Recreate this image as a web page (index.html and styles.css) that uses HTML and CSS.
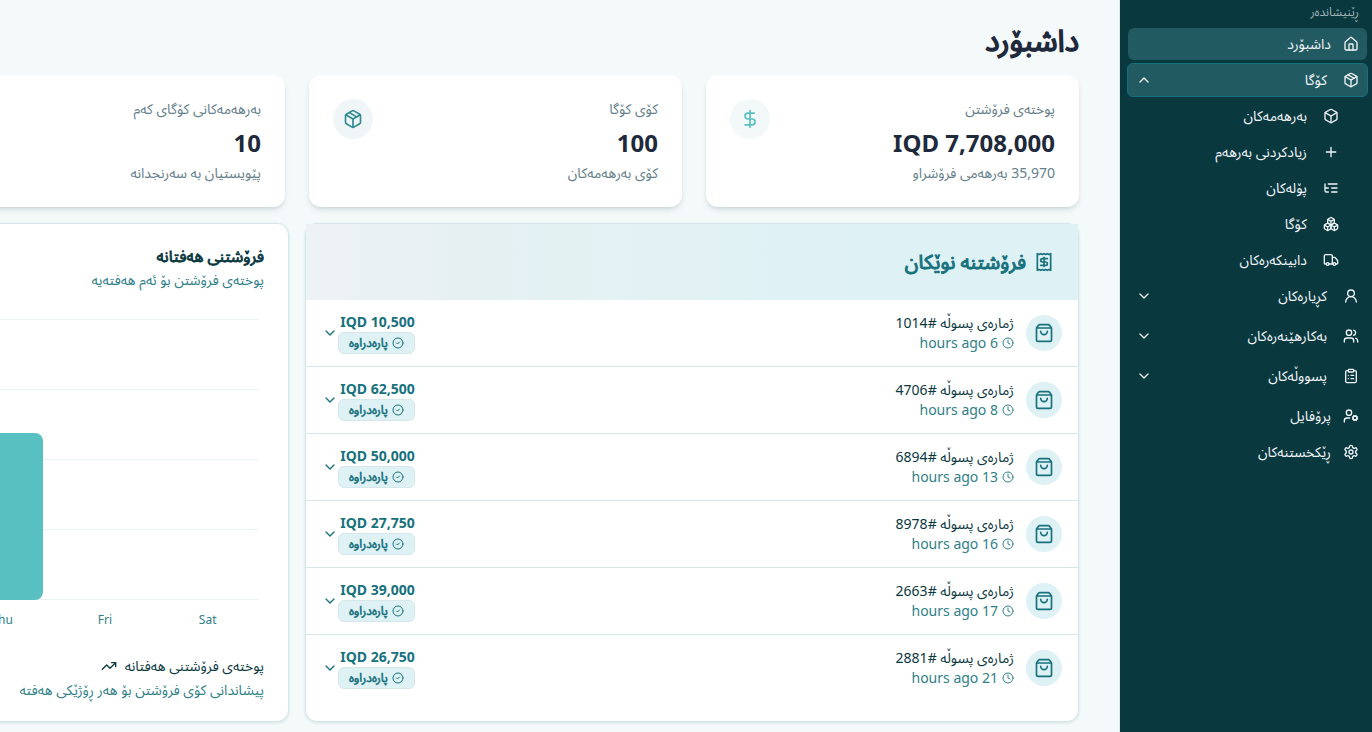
FILE: index.html
```html
<!DOCTYPE html>
<html lang="ckb" dir="rtl">
<head>
<meta charset="utf-8">
<title>داشبۆرد</title>
<link rel="stylesheet" href="styles.css">
</head>
<body>
<svg class="sprite" aria-hidden="true">
  <symbol id="house" viewBox="0 0 24 24"><path d="M15 21v-8a1 1 0 0 0-1-1h-4a1 1 0 0 0-1 1v8"/><path d="M3 10a2 2 0 0 1 .709-1.528l7-5.999a2 2 0 0 1 2.582 0l7 5.999A2 2 0 0 1 21 10v9a2 2 0 0 1-2 2H5a2 2 0 0 1-2-2z"/></symbol>
  <symbol id="package" viewBox="0 0 24 24"><path d="m7.5 4.27 9 5.15"/><path d="M21 8a2 2 0 0 0-1-1.73l-7-4a2 2 0 0 0-2 0l-7 4A2 2 0 0 0 3 8v8a2 2 0 0 0 1 1.73l7 4a2 2 0 0 0 2 0l7-4A2 2 0 0 0 21 16Z"/><path d="m3.3 7 8.7 5 8.7-5"/><path d="M12 22V12"/></symbol>
  <symbol id="box" viewBox="0 0 24 24"><path d="M21 8a2 2 0 0 0-1-1.73l-7-4a2 2 0 0 0-2 0l-7 4A2 2 0 0 0 3 8v8a2 2 0 0 0 1 1.73l7 4a2 2 0 0 0 2 0l7-4A2 2 0 0 0 21 16Z"/><path d="m3.3 7 8.7 5 8.7-5"/><path d="M12 22V12"/></symbol>
  <symbol id="plus" viewBox="0 0 24 24"><path d="M5 12h14M12 5v14"/></symbol>
  <symbol id="tree" viewBox="0 0 24 24"><path d="M21 12h-8M21 6H8M21 18h-8M3 6v4c0 1.1.9 2 2 2h3M3 10v6c0 1.1.9 2 2 2h3"/></symbol>
  <symbol id="boxes" viewBox="0 0 24 24"><path d="M2.97 12.92A2 2 0 0 0 2 14.63v3.24a2 2 0 0 0 .97 1.71l3 1.8a2 2 0 0 0 2.06 0L12 19v-5.5l-5-3-4.03 2.42Z"/><path d="m7 16.5-4.74-2.85M7 16.5l5-3M7 16.5v5.17"/><path d="M12 13.5V19l3.97 2.38a2 2 0 0 0 2.06 0l3-1.8a2 2 0 0 0 .97-1.71v-3.24a2 2 0 0 0-.97-1.71L17 10.5l-5 3Z"/><path d="m17 16.5-5-3M17 16.5l4.74-2.85M17 16.5v5.17"/><path d="M7.97 4.42A2 2 0 0 0 7 6.13v4.37l5 3 5-3V6.13a2 2 0 0 0-.97-1.71l-3-1.8a2 2 0 0 0-2.06 0l-3 1.8Z"/><path d="M12 8 7.26 5.15M12 8l4.74-2.85M12 13.5V8"/></symbol>
  <symbol id="truck" viewBox="0 0 24 24"><path d="M14 18V6a2 2 0 0 0-2-2H4a2 2 0 0 0-2 2v11a1 1 0 0 0 1 1h2M15 18H9M19 18h2a1 1 0 0 0 1-1v-3.65a1 1 0 0 0-.22-.624l-3.48-4.35A1 1 0 0 0 17.52 8H14"/><circle cx="17" cy="18" r="2"/><circle cx="7" cy="18" r="2"/></symbol>
  <symbol id="user" viewBox="0 0 24 24"><circle cx="12" cy="8" r="5"/><path d="M20 21a8 8 0 0 0-16 0"/></symbol>
  <symbol id="users" viewBox="0 0 24 24"><path d="M16 21v-2a4 4 0 0 0-4-4H6a4 4 0 0 0-4 4v2"/><circle cx="9" cy="7" r="4"/><path d="M22 21v-2a4 4 0 0 0-3-3.87M16 3.13a4 4 0 0 1 0 7.75"/></symbol>
  <symbol id="clipboard" viewBox="0 0 24 24"><rect width="8" height="4" x="8" y="2" rx="1"/><path d="M16 4h2a2 2 0 0 1 2 2v14a2 2 0 0 1-2 2H6a2 2 0 0 1-2-2V6a2 2 0 0 1 2-2h2M12 11h4M12 16h4M8 11h.01M8 16h.01"/></symbol>
  <symbol id="user-cog" viewBox="0 0 24 24"><path d="M10 15H6a4 4 0 0 0-4 4v2"/><circle cx="9" cy="7" r="4"/><circle cx="18" cy="15" r="3"/><path d="m21.700 16.400-.9-.3M15.200 13.900l-.9-.3M16.600 18.700l.3-.9M19.100 12.200l.3-.9M19.600 18.700l-.4-1M16.800 12.300l-.4-1M14.300 16.600l1-.4M20.700 13.800l1-.4"/></symbol>
  <symbol id="gear" viewBox="0 0 24 24"><path d="M12.22 2h-.44a2 2 0 0 0-2 2v.18a2 2 0 0 1-1 1.73l-.43.25a2 2 0 0 1-2 0l-.15-.08a2 2 0 0 0-2.73.73l-.22.38a2 2 0 0 0 .73 2.73l.15.1a2 2 0 0 1 1 1.72v.51a2 2 0 0 1-1 1.74l-.15.09a2 2 0 0 0-.73 2.73l.22.38a2 2 0 0 0 2.73.73l.15-.08a2 2 0 0 1 2 0l.43.25a2 2 0 0 1 1 1.73V20a2 2 0 0 0 2 2h.44a2 2 0 0 0 2-2v-.18a2 2 0 0 1 1-1.73l.43-.25a2 2 0 0 1 2 0l.15.08a2 2 0 0 0 2.73-.73l.22-.39a2 2 0 0 0-.73-2.73l-.15-.08a2 2 0 0 1-1-1.74v-.5a2 2 0 0 1 1-1.74l.15-.09a2 2 0 0 0 .73-2.73l-.22-.38a2 2 0 0 0-2.73-.73l-.15.08a2 2 0 0 1-2 0l-.43-.25a2 2 0 0 1-1-1.73V4a2 2 0 0 0-2-2z"/><circle cx="12" cy="12" r="3"/></symbol>
  <symbol id="down" viewBox="0 0 24 24"><path d="m6 9 6 6 6-6"/></symbol>
  <symbol id="up" viewBox="0 0 24 24"><path d="m18 15-6-6-6 6"/></symbol>
  <symbol id="dollar" viewBox="0 0 24 24"><path d="M12 2v20M17 5H9.5a3.5 3.5 0 0 0 0 7h5a3.5 3.5 0 0 1 0 7H6"/></symbol>
  <symbol id="receipt" viewBox="0 0 24 24"><path d="M4 2v20l2-1 2 1 2-1 2 1 2-1 2 1 2-1 2 1V2l-2 1-2-1-2 1-2-1-2 1-2-1-2 1Z"/><path d="M16 8h-6a2 2 0 1 0 0 4h4a2 2 0 1 1 0 4H8M12 17.500v-11"/></symbol>
  <symbol id="bag" viewBox="0 0 24 24"><path d="M16 10a4 4 0 0 1-8 0"/><path d="M3.103 6.034h17.794"/><path d="M3.4 5.467a2 2 0 0 0-.4 1.2V20a2 2 0 0 0 2 2h14a2 2 0 0 0 2-2V6.667a2 2 0 0 0-.4-1.2l-2-2.667A2 2 0 0 0 17 2H7a2 2 0 0 0-1.6.8z"/></symbol>
  <symbol id="clock" viewBox="0 0 24 24"><circle cx="12" cy="12" r="10"/><path d="M12 6v6l4 2"/></symbol>
  <symbol id="check" viewBox="0 0 24 24"><circle cx="12" cy="12" r="10"/><path d="m9 12 2 2 4-4"/></symbol>
  <symbol id="trend" viewBox="0 0 24 24"><path d="M16 7h6v6"/><path d="m22 7-8.500 8.500-5-5L2 17"/></symbol>
</svg>
<div class="layout">
  <aside class="sidebar">
    <p class="sidebar-title">ڕێنیشاندەر</p>
    <nav class="menu">
      <a class="item active" href="#"><svg class="icon"><use href="#house"/></svg><span>داشبۆرد</span></a>
      <button class="item group open" type="button"><svg class="icon"><use href="#package"/></svg><span>کۆگا</span><svg class="icon chevron"><use href="#up"/></svg></button>
      <div class="submenu">
        <a class="item" href="#"><svg class="icon"><use href="#box"/></svg><span>بەرهەمەکان</span></a>
        <a class="item" href="#"><svg class="icon"><use href="#plus"/></svg><span>زیادکردنی بەرهەم</span></a>
        <a class="item" href="#"><svg class="icon"><use href="#tree"/></svg><span>پۆلەکان</span></a>
        <a class="item" href="#"><svg class="icon"><use href="#boxes"/></svg><span>کۆگا</span></a>
        <a class="item" href="#"><svg class="icon"><use href="#truck"/></svg><span>دابینکەرەکان</span></a>
      </div>
      <button class="item group" type="button"><svg class="icon"><use href="#user"/></svg><span>کڕیارەکان</span><svg class="icon chevron"><use href="#down"/></svg></button>
      <button class="item group" type="button"><svg class="icon"><use href="#users"/></svg><span>بەکارهێنەرەکان</span><svg class="icon chevron"><use href="#down"/></svg></button>
      <button class="item group" type="button"><svg class="icon"><use href="#clipboard"/></svg><span>پسووڵەکان</span><svg class="icon chevron"><use href="#down"/></svg></button>
      <a class="item" href="#"><svg class="icon"><use href="#user-cog"/></svg><span>پرۆفایل</span></a>
      <a class="item" href="#"><svg class="icon"><use href="#gear"/></svg><span>ڕێکخستنەکان</span></a>
    </nav>
  </aside>
  <main class="main">
    <div class="content">
      <h1 class="page-title heavy">داشبۆرد</h1>
      <section class="stats">
        <article class="stat">
          <div><p class="stat-label">پوختەی فرۆشتن</p><p class="stat-value"><bdi>IQD 7,708,000</bdi></p><p class="stat-label">35,970 بەرهەمی فرۆشراو</p></div>
          <span class="stat-icon light"><svg><use href="#dollar"/></svg></span>
        </article>
        <article class="stat">
          <div><p class="stat-label">کۆی کۆگا</p><p class="stat-value">100</p><p class="stat-label">کۆی بەرهەمەکان</p></div>
          <span class="stat-icon"><svg><use href="#package"/></svg></span>
        </article>
        <article class="stat">
          <div><p class="stat-label">بەرهەمەکانی کۆگای کەم</p><p class="stat-value">10</p><p class="stat-label">پێویستیان بە سەرنجدانە</p></div>
        </article>
      </section>
      <section class="panels">
        <article class="card">
          <h2 class="sales-head"><svg><use href="#receipt"/></svg><span class="heavy">فرۆشتنە نوێکان</span></h2>
          <ul class="sales">
            <li class="sale"><span class="avatar"><svg><use href="#bag"/></svg></span><div class="sale-info"><p>ژمارەی پسوڵە #1014</p><p class="ago"><svg><use href="#clock"/></svg>6 hours ago</p></div><div class="sale-sum"><bdi>IQD 10,500</bdi><span class="badge"><svg><use href="#check"/></svg><span class="heavy">پارەدراوە</span></span></div><button class="toggle" type="button" aria-label="1014"><svg class="icon"><use href="#down"/></svg></button></li>
            <li class="sale"><span class="avatar"><svg><use href="#bag"/></svg></span><div class="sale-info"><p>ژمارەی پسوڵە #4706</p><p class="ago"><svg><use href="#clock"/></svg>8 hours ago</p></div><div class="sale-sum"><bdi>IQD 62,500</bdi><span class="badge"><svg><use href="#check"/></svg><span class="heavy">پارەدراوە</span></span></div><button class="toggle" type="button" aria-label="4706"><svg class="icon"><use href="#down"/></svg></button></li>
            <li class="sale"><span class="avatar"><svg><use href="#bag"/></svg></span><div class="sale-info"><p>ژمارەی پسوڵە #6894</p><p class="ago"><svg><use href="#clock"/></svg>13 hours ago</p></div><div class="sale-sum"><bdi>IQD 50,000</bdi><span class="badge"><svg><use href="#check"/></svg><span class="heavy">پارەدراوە</span></span></div><button class="toggle" type="button" aria-label="6894"><svg class="icon"><use href="#down"/></svg></button></li>
            <li class="sale"><span class="avatar"><svg><use href="#bag"/></svg></span><div class="sale-info"><p>ژمارەی پسوڵە #8978</p><p class="ago"><svg><use href="#clock"/></svg>16 hours ago</p></div><div class="sale-sum"><bdi>IQD 27,750</bdi><span class="badge"><svg><use href="#check"/></svg><span class="heavy">پارەدراوە</span></span></div><button class="toggle" type="button" aria-label="8978"><svg class="icon"><use href="#down"/></svg></button></li>
            <li class="sale"><span class="avatar"><svg><use href="#bag"/></svg></span><div class="sale-info"><p>ژمارەی پسوڵە #2663</p><p class="ago"><svg><use href="#clock"/></svg>17 hours ago</p></div><div class="sale-sum"><bdi>IQD 39,000</bdi><span class="badge"><svg><use href="#check"/></svg><span class="heavy">پارەدراوە</span></span></div><button class="toggle" type="button" aria-label="2663"><svg class="icon"><use href="#down"/></svg></button></li>
            <li class="sale"><span class="avatar"><svg><use href="#bag"/></svg></span><div class="sale-info"><p>ژمارەی پسوڵە #2881</p><p class="ago"><svg><use href="#clock"/></svg>21 hours ago</p></div><div class="sale-sum"><bdi>IQD 26,750</bdi><span class="badge"><svg><use href="#check"/></svg><span class="heavy">پارەدراوە</span></span></div><button class="toggle" type="button" aria-label="2881"><svg class="icon"><use href="#down"/></svg></button></li>
          </ul>
        </article>
        <article class="card weekly">
          <h2 class="weekly-title heavy">فرۆشتنی هەفتانە</h2>
          <p class="weekly-sub">پوختەی فرۆشتن بۆ ئەم هەفتەیە</p>
          <div class="chart" dir="ltr">
            <div class="plot"><div class="bar" style="height: 167px"></div></div>
            <div class="days"><span class="thu">Thu</span><span>Fri</span><span>Sat</span></div>
          </div>
          <p class="weekly-note">پوختەی فرۆشتنی هەفتانە <svg class="icon"><use href="#trend"/></svg></p>
          <p class="weekly-sub">پیشاندانی کۆی فرۆشتن بۆ هەر ڕۆژێکی هەفتە</p>
        </article>
      </section>
    </div>
  </main>
</div>
</body>
</html>
```
FILE: styles.css
```css
* { box-sizing: border-box; margin: 0; padding: 0; }
body { font-family: "Noto Sans", "Noto Sans Arabic", sans-serif; font-size: 14px; line-height: 20px; background: #f4f9fa; color: #0a383f; }
svg { fill: none; stroke: currentColor; stroke-width: 2; stroke-linecap: round; stroke-linejoin: round; flex: none; }
button { font: inherit; border: 0; background: none; color: inherit; cursor: pointer; }
a { color: inherit; text-decoration: none; }
.sprite { display: none; }
.icon { width: 16px; height: 16px; }
.heavy { font-weight: 400; -webkit-text-stroke: 0.05em currentColor; }

.layout { display: flex; min-height: 100vh; }
.sidebar { flex: 0 0 252px; background: #0a383f; color: #f1f5f9; padding: 4px 5px 8px 8px; }
.sidebar-title { font-size: 12px; line-height: 16px; padding: 0 8px; margin-bottom: 8px; color: #a3b4b8; }
.menu { display: flex; flex-direction: column; gap: 4px; }
.item { display: flex; align-items: center; gap: 12px; height: 32px; padding: 0 8px; border-radius: 6px; }
.item.group { gap: 16px; margin-bottom: 4px; }
.item.active, .item.open { background: #215a61; }
.item.group.open { height: 34px; margin: -1px; border: 1px solid #14727e; }
.chevron { margin-inline-start: auto; }
.submenu { display: flex; flex-direction: column; gap: 4px; padding-inline-start: 20px; }
.submenu .item { gap: 16px; }

.main { flex: 1; min-width: 0; overflow: hidden; padding: 24px 40px 10px 0; border-right: 1px solid #dbe9ec; }
.content { min-width: 1564px; }
.page-title { font-size: 30px; line-height: 32px; color: #1e293b; margin-bottom: 19px; }
.stats { display: grid; grid-template-columns: repeat(4, 1fr); gap: 24px; margin-bottom: 16px; }
.stat { display: flex; justify-content: space-between; align-items: flex-start; min-height: 132px; padding: 24px; background: #fff; border-radius: 12px; box-shadow: 0 4px 6px -1px #0a383f1a, 0 2px 4px -2px #0a383f2e; }
.stat-label { color: #64808a; }
.stat-value { font-size: 24px; line-height: 32px; font-weight: 700; color: #1e293b; margin: 8px 0 4px; }
.stat-icon { display: grid; place-items: center; width: 40px; height: 40px; border-radius: 50%; background: #f0f6f7; color: #2f8a92; }
.stat-icon.light { color: #58c0c0; background: #f3f8f9; }
.stat-icon svg { width: 20px; height: 20px; }

.panels { display: grid; grid-template-columns: 1fr 1fr; gap: 16px; }
.card { background: #fff; border: 1px solid #d5e7ea; border-radius: 12px; box-shadow: 0 1px 3px #0a383f1f; }
.sales-head { display: flex; align-items: center; gap: 8px; height: 76px; padding: 0 24px; font-size: 20px; line-height: 28px; color: #17727e; background: linear-gradient(to right, #edf2f5, #e6f0f3 20%, #e3f2f4 40%, #def1f5 75%); }
.sales-head svg { width: 20px; height: 20px; }
.sales { list-style: none; padding-bottom: 20px; }
.sale { display: flex; align-items: center; height: 67px; padding: 0 16px; border-bottom: 1px solid #d5e7ea; }
.sale:last-child { height: 66px; border-bottom: 0; }
.avatar { display: grid; place-items: center; width: 36px; height: 36px; border-radius: 50%; background: #def1f5; color: #17727e; }
.avatar svg { width: 20px; height: 20px; }
.sale-info { flex: 1; margin-inline-start: 12px; }
.ago { display: flex; align-items: center; gap: 4px; color: #2f8088; }
.ago svg, .badge svg { width: 12px; height: 12px; }
.sale-sum { display: flex; flex-direction: column; align-items: flex-start; font-weight: 700; color: #17727e; }
.badge { display: flex; align-items: center; gap: 4px; height: 22px; padding: 0 10px; font-size: 12px; line-height: 16px; border: 1px solid #d5e7ea; border-radius: 6px; background: #def1f5; }
.toggle { display: flex; color: #17727e; }

.weekly { padding: 22px 24px 21px; }
.weekly-title { font-size: 16px; line-height: 20px; }
.weekly-sub { color: #2f8088; margin-top: 4px; }
.chart { margin: 29px 0 26px; padding-right: 5px; }
.plot { display: grid; grid-template-columns: repeat(7, 1fr); align-items: end; height: 281px; background: repeating-linear-gradient(to bottom, #e9f2f4 0 1px, transparent 1px 70px); }
.bar { grid-column: 5; width: 80%; justify-self: center; background: #58c0c0; border-radius: 8px; }
.days { display: grid; grid-template-columns: repeat(7, 1fr); margin-top: 10px; font-size: 12px; line-height: 20px; text-align: center; color: #2f8088; }
.thu { grid-column: 5; }
.weekly-note { display: flex; align-items: center; gap: 8px; }
```
